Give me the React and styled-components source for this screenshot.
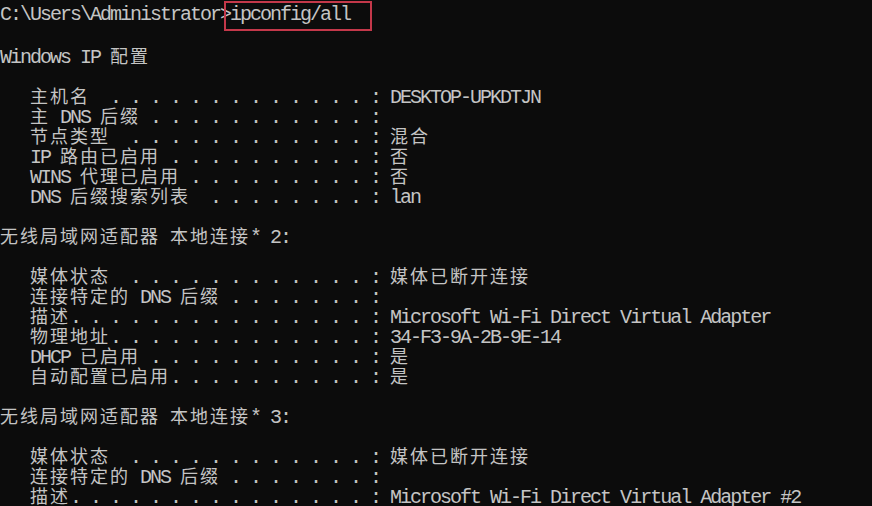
import React from 'react';
import styled, { createGlobalStyle } from 'styled-components';

const GlobalStyle = createGlobalStyle`
  html, body {
    margin: 0;
    padding: 0;
    background: #0c0c0c;
  }
`;

const Console = styled.div`
  width: 872px;
  height: 506px;
  overflow: hidden;
  box-sizing: border-box;
  padding-top: 5px;
  background: #0c0c0c;
  color: #c4c4c4;
  font-family: 'Liberation Mono', monospace;
  font-size: 20px;
  letter-spacing: -2px;
`;

const Line = styled.div`
  height: 20px;
  line-height: 20px;
  white-space: pre;
`;

const Wide = styled.span`
  font-family: 'Noto Sans CJK SC', sans-serif;
  font-size: 18px;
  letter-spacing: 2px;
`;

const Marked = styled.span`
  position: relative;

  &::after {
    content: '';
    position: absolute;
    left: -6px;
    right: -22px;
    top: -2px;
    bottom: -5px;
    border: 2px solid #c4384a;
  }
`;

const isWide = (ch) => ch.charCodeAt(0) > 0x2e80;

// split text into runs so CJK glyphs take two cells
function Cells({ text }) {
  const runs = [];
  let cur = '';
  let wide = false;
  for (const ch of text) {
    const w = isWide(ch);
    if (cur && w !== wide) {
      runs.push({ t: cur, w: wide });
      cur = '';
    }
    wide = w;
    cur += ch;
  }
  if (cur) runs.push({ t: cur, w: wide });
  return runs.map((r, i) => (r.w ? <Wide key={i}>{r.t}</Wide> : <React.Fragment key={i}>{r.t}</React.Fragment>));
}

const lines = [
  '',
  'Windows IP 配置',
  '',
  '   主机名  . . . . . . . . . . . . . : DESKTOP-UPKDTJN',
  '   主 DNS 后缀 . . . . . . . . . . . :',
  '   节点类型  . . . . . . . . . . . . : 混合',
  '   IP 路由已启用 . . . . . . . . . . : 否',
  '   WINS 代理已启用 . . . . . . . . . : 否',
  '   DNS 后缀搜索列表  . . . . . . . . : lan',
  '',
  '无线局域网适配器 本地连接* 2:',
  '',
  '   媒体状态  . . . . . . . . . . . . : 媒体已断开连接',
  '   连接特定的 DNS 后缀 . . . . . . . :',
  '   描述. . . . . . . . . . . . . . . : Microsoft Wi-Fi Direct Virtual Adapter',
  '   物理地址. . . . . . . . . . . . . : 34-F3-9A-2B-9E-14',
  '   DHCP 已启用 . . . . . . . . . . . : 是',
  '   自动配置已启用. . . . . . . . . . : 是',
  '',
  '无线局域网适配器 本地连接* 3:',
  '',
  '   媒体状态  . . . . . . . . . . . . : 媒体已断开连接',
  '   连接特定的 DNS 后缀 . . . . . . . :',
  '   描述. . . . . . . . . . . . . . . : Microsoft Wi-Fi Direct Virtual Adapter #2',
];

export default function App() {
  return (
    <>
      <GlobalStyle />
      <Console>
        <Line>
          C:\Users\Administrator&gt;<Marked>ipconfig/all</Marked>
        </Line>
        {lines.map((l, i) => (
          <Line key={i}>
            <Cells text={l} />
          </Line>
        ))}
      </Console>
    </>
  );
}
